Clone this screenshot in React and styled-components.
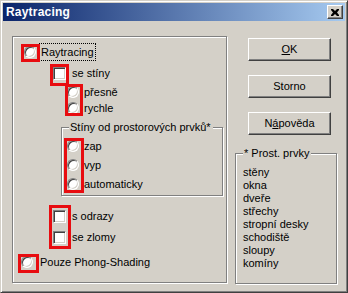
import React from "react";
import styled, { createGlobalStyle } from "styled-components";

const Global = createGlobalStyle`
  html, body { margin: 0; padding: 0; background: #d4d0c8; }
  body { font-family: "Liberation Sans", Arial, sans-serif; font-size: 11px; color: #000; }
`;

const Window = styled.div`
  position: relative;
  box-sizing: border-box;
  width: 348px;
  height: 293px;
  background: #d4d0c8;
  border: 1px solid;
  border-color: #d4d0c8 #404040 #404040 #d4d0c8;
  box-shadow: inset 1px 1px 0 #fff, inset -1px -1px 0 #808080;
  padding: 2px;
  display: flex;
  flex-direction: column;
`;

const TitleBar = styled.div`
  height: 18px;
  display: flex;
  align-items: center;
  justify-content: space-between;
  padding: 0 2px 0 3px;
  background: linear-gradient(to right, #0a246a, #a6caf0);
`;

const Title = styled.span`
  color: #fff;
  font-weight: bold;
  font-size: 12px;
  letter-spacing: 0.2px;
`;

const CloseBtn = styled.div`
  box-sizing: border-box;
  width: 16px;
  height: 14px;
  background: #d4d0c8;
  border: 1px solid;
  border-color: #fff #404040 #404040 #fff;
  box-shadow: inset -1px -1px 0 #808080;
  display: flex;
  align-items: center;
  justify-content: center;
`;

const Body = styled.div`
  display: flex;
  padding: 15px 0 0 9px;
  gap: 8px;
`;

const Group = styled.div`
  position: relative;
  box-sizing: border-box;
  width: ${(p) => p.w}px;
  height: ${(p) => p.h}px;
  border: 1px solid #808080;
  box-shadow: 1px 1px 0 #fff, inset 1px 1px 0 #fff;
  display: flex;
  flex-direction: column;
  padding-top: ${(p) => p.pt || 0}px;
  margin-top: ${(p) => p.mt || 0}px;
  margin-left: ${(p) => p.ml || 0}px;
`;

const Legend = styled.span`
  position: absolute;
  top: -7px;
  left: ${(p) => p.left || 6}px;
  padding: 0 2px 0 1px;
  background: #d4d0c8;
  line-height: 13px;
  white-space: nowrap;
`;

const Row = styled.div`
  display: flex;
  align-items: center;
  height: 16px;
  margin-top: ${(p) => p.mt || 0}px;
  padding-left: ${(p) => p.indent}px;
  white-space: nowrap;
`;

const Radio = styled.span`
  box-sizing: border-box;
  width: 12px;
  height: 12px;
  border-radius: 50%;
  background: #fff;
  border: 1px solid;
  border-color: #808080 #fff #fff #808080;
  box-shadow: inset 1px 1px 0 #404040, inset -1px -1px 0 #d4d0c8;
  margin-right: ${(p) => p.gap || 5}px;
  flex: none;
`;

const Check = styled.span`
  box-sizing: border-box;
  width: 13px;
  height: 13px;
  background: #fff;
  border: 1px solid;
  border-color: #808080 #fff #fff #808080;
  box-shadow: inset 1px 1px 0 #404040, inset -1px -1px 0 #d4d0c8;
  margin-right: ${(p) => p.gap || 6}px;
  flex: none;
`;

const Focus = styled.span`
  outline: 1px dotted #000;
  outline-offset: 0;
  padding: 1px 1px;
  line-height: 14px;
`;

const Side = styled.div`
  display: flex;
  flex-direction: column;
`;

const Button = styled.div`
  box-sizing: border-box;
  width: 83px;
  height: 23px;
  margin-left: 13px;
  margin-top: ${(p) => p.mt || 0}px;
  border: 1px solid;
  border-color: #fff #404040 #404040 #fff;
  box-shadow: inset -1px -1px 0 #808080;
  display: flex;
  align-items: center;
  justify-content: center;
  padding-bottom: 1px;
`;

const U = styled.span`
  text-decoration: underline;
  text-underline-offset: 1px;
`;

const ItemList = styled.div`
  display: flex;
  flex-direction: column;
  padding: 12px 0 0 7px;
`;

const Item = styled.span`
  display: block;
  height: 13px;
  line-height: 13px;
`;

const Mark = styled.div`
  position: absolute;
  box-sizing: border-box;
  border: 3px solid #e80c10;
  left: ${(p) => p.x}px;
  top: ${(p) => p.y}px;
  width: ${(p) => p.w}px;
  height: ${(p) => p.h}px;
  pointer-events: none;
`;

const marks = [
  { x: 20, y: 43, w: 19, h: 18 },
  { x: 49, y: 63, w: 19, h: 22 },
  { x: 64, y: 83, w: 18, h: 32 },
  { x: 63, y: 137, w: 20, h: 55 },
  { x: 48, y: 204, w: 22, h: 44 },
  { x: 17, y: 253, w: 21, h: 19 },
];

const items = ["stěny", "okna", "dveře", "střechy", "stropní desky", "schodiště", "sloupy", "komíny"];

export default function App() {
  return (
    <>
      <Global />
      <Window>
        <TitleBar>
          <Title>Raytracing</Title>
          <CloseBtn>
            <svg width="8" height="7" viewBox="0 0 8 7">
              <path d="M0 0h2l2 2 2-2h2v1L6 3.5 8 6v1H6L4 5 2 7H0V6l2-2.5L0 1z" fill="#000" />
            </svg>
          </CloseBtn>
        </TitleBar>
        <Body>
          <Group w={215} h={247} pt={7}>
            <Row indent={11}>
              <Radio gap={4} />
              <Focus>Raytracing</Focus>
            </Row>
            <Row indent={40} mt={5}>
              <Check />
              se stíny
            </Row>
            <Row indent={54} mt={3}>
              <Radio />
              přesně
            </Row>
            <Row indent={54}>
              <Radio />
              rychle
            </Row>
            <Group w={162} h={69} pt={10} mt={11} ml={48}>
              <Legend left={7}>Stíny od prostorových prvků*</Legend>
              <Row indent={5}>
                <Radio />
                zap
              </Row>
              <Row indent={5} mt={3}>
                <Radio />
                vyp
              </Row>
              <Row indent={5} mt={3}>
                <Radio />
                automaticky
              </Row>
            </Group>
            <Row indent={40} mt={12}>
              <Check />
              s odrazy
            </Row>
            <Row indent={40} mt={5}>
              <Check />
              se zlomy
            </Row>
            <Row indent={8} mt={9}>
              <Radio gap={7} />
              Pouze Phong-Shading
            </Row>
          </Group>
          <Side>
            <Button mt={2}>
              <span><U>O</U>K</span>
            </Button>
            <Button mt={14}>Storno</Button>
            <Button mt={14}>
              <span>N<U>á</U>pověda</span>
            </Button>
            <Group w={102} h={131} mt={18}>
              <Legend left={7}>* Prost. prvky</Legend>
              <ItemList>
                {items.map((t) => (
                  <Item key={t}>{t}</Item>
                ))}
              </ItemList>
            </Group>
          </Side>
        </Body>
        {marks.map((m, i) => (
          <Mark key={i} {...m} />
        ))}
      </Window>
    </>
  );
}
